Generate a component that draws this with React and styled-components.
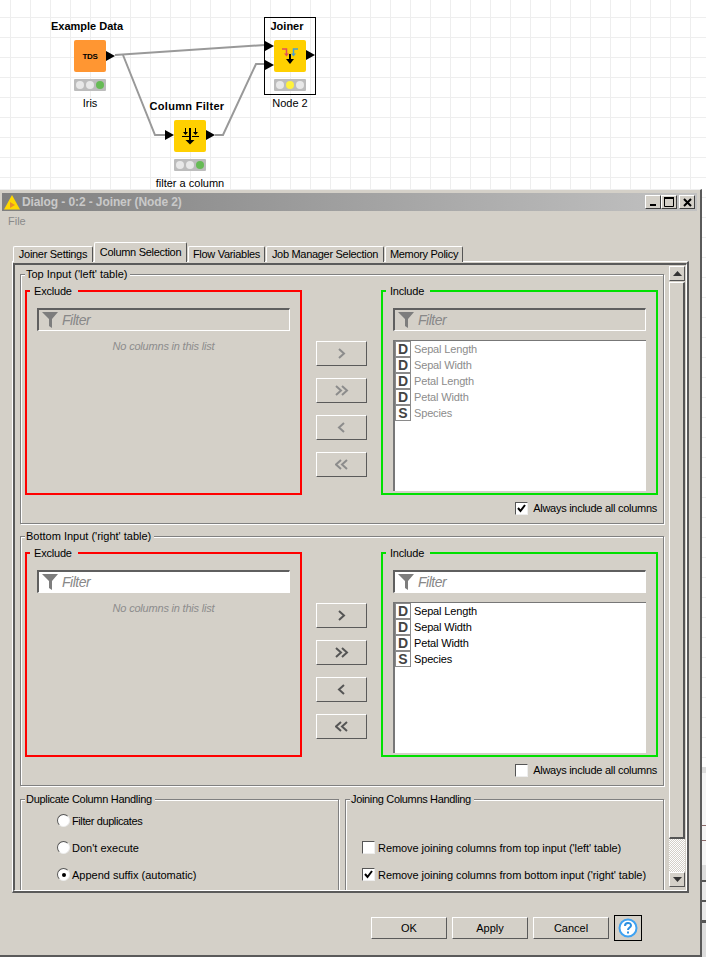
import React from 'react';
import styled, { createGlobalStyle } from 'styled-components';

const FACE = '#d4d0c8';

const GlobalStyle = createGlobalStyle`
  * {
    box-sizing: border-box;
  }

  body {
    margin: 0;
    background: #fff;
    font-family: "Liberation Sans", Arial, sans-serif;
    font-size: 11px;
    color: #000;
  }
`;

const Page = styled.div`
  position: relative;
  display: flex;
  flex-direction: column;
  width: 706px;
  height: 957px;
  overflow: hidden;
  background-color: #fff;
  background-image:
    linear-gradient(to right, #eeeeee 1px, transparent 1px),
    linear-gradient(to bottom, #eeeeee 1px, transparent 1px);
  background-size: 20px 20px;
  background-position: 10px 17px;
`;

const Canvas = styled.div`
  position: relative;
  flex: 0 0 189px;
`;

const Wires = styled.svg`
  position: absolute;
  inset: 0;
`;

const Node = styled.div`
  position: absolute;
  left: ${(p) => p.$x}px;
  top: ${(p) => p.$y}px;
  display: flex;
  flex-direction: column;
  align-items: center;
  width: 100px;
`;

const NodeTitle = styled.div`
  height: 14px;
  line-height: 14px;
  margin: 0 6px 7px 0;
  font-weight: bold;
  letter-spacing: ${(p) => p.$track || 0}px;
  white-space: nowrap;
`;

const NodeIcon = styled.div`
  position: relative;
  display: flex;
  align-items: center;
  justify-content: center;
  width: 32px;
  height: 32px;
  border-radius: 2px;
  background: ${(p) => p.$color};
  font-size: 8px;
  font-weight: bold;
  letter-spacing: -0.3px;
`;

const Port = styled.svg`
  position: absolute;
  top: ${(p) => p.$y}px;
  ${(p) => (p.$out ? 'left: 32px;' : 'left: -9px;')}
`;

const Lights = styled.div`
  display: flex;
  align-items: center;
  justify-content: center;
  gap: 2px;
  width: 32px;
  height: 12px;
  margin-top: 7px;
  background: #bcbcbc;
  border-radius: 1px;
`;

const Light = styled.span`
  width: 8px;
  height: 8px;
  border-radius: 50%;
  background: ${(p) => p.$color || '#e8e8e8'};
`;

const NodeLabel = styled.div`
  height: 14px;
  line-height: 14px;
  margin-top: 5px;
  white-space: nowrap;
`;

const Selection = styled.div`
  position: absolute;
  left: 24px;
  top: -2px;
  width: 52px;
  height: 78px;
  border: 1px solid #000;
  pointer-events: none;
`;

const Lower = styled.div`
  display: flex;
  flex: 1;
  min-height: 0;
`;

const Dialog = styled.div`
  display: flex;
  flex-direction: column;
  flex: 0 0 702px;
  padding: 3px 3px 0 2px;
  background: ${FACE};
  border-top: 1px solid #eeeeee;
  border-right: 2px solid #5a5a5a;
  border-bottom: 2px solid #5a5a5a;
`;

const TitleBar = styled.div`
  display: flex;
  align-items: center;
  height: 18px;
  padding: 0 2px;
  background: linear-gradient(to right, #7f7f7f, #c2c2c2);
  color: #c9c9c9;
  font-size: 12px;
  font-weight: bold;
  letter-spacing: -0.1px;
`;

const TitleText = styled.span`
  margin-left: 2px;
  flex: 1;
  white-space: nowrap;
`;

const WindowButton = styled.button`
  display: flex;
  align-items: center;
  justify-content: center;
  width: 16px;
  height: 14px;
  margin-left: ${(p) => p.$gap || 0}px;
  padding: 0;
  background: ${FACE};
  border: 1px solid;
  border-color: #fff #404040 #404040 #fff;
`;

const MenuBar = styled.div`
  height: 31px;
  padding: 3px 0 0 6px;
  color: #8a8a8a;
  font-size: 11px;
  line-height: 14px;
`;

const TabBar = styled.div`
  position: relative;
  z-index: 1;
  display: flex;
  align-items: flex-end;
  gap: 1px;
  height: 20px;
  margin-bottom: -1px;
  padding-left: 11px;
`;

const Tab = styled.div`
  display: flex;
  align-items: center;
  justify-content: center;
  width: ${(p) => p.$w}px;
  height: ${(p) => (p.$active ? 20 : 16)}px;
  padding-bottom: ${(p) => (p.$active ? 2 : 1)}px;
  background: ${FACE};
  border-top: 1px solid #fff;
  border-left: 1px solid #fff;
  border-right: 1px solid #555;
  border-radius: 2px 2px 0 0;
  letter-spacing: -0.3px;
  white-space: nowrap;
`;

const TabPanel = styled.div`
  width: 677px;
  height: 632px;
  margin-left: 10px;
  padding-top: 1px;
  border-top: 1px solid #fff;
  border-left: 1px solid #fff;
  border-right: 2px solid #5a5a5a;
  border-bottom: 2px solid #5a5a5a;
`;

const ScrollPane = styled.div`
  display: flex;
  height: 100%;
  border-top: 2px solid #5a5a5a;
  border-left: 2px solid #5a5a5a;
  border-right: 1px solid #fff;
  border-bottom: 1px solid #fff;
  overflow: hidden;
`;

const Content = styled.div`
  display: flex;
  flex-direction: column;
  gap: 5px;
  flex: 0 0 654px;
  padding: 2px 5px 0 5px;
`;

const Group = styled.fieldset`
  display: flex;
  flex-direction: column;
  flex-shrink: 0;
  min-width: 0;
  height: ${(p) => p.$h}px;
  margin: 0;
  padding: 0 5px 0 4px;
  border: 1px solid #808080;
  box-shadow: inset 1px 1px 0 #fff, 1px 1px 0 #fff;
`;

const GroupLegend = styled.legend`
  height: 14px;
  margin-left: 0;
  padding: 0 3px 0 1px;
  line-height: 14px;
  letter-spacing: ${(p) => p.$track || 0}px;
  background: ${FACE};
`;

const Columns = styled.div`
  display: grid;
  grid-template-columns: 277px 51px 277px;
  column-gap: 14px;
  padding-top: 3px;
`;

const ListBox = styled.fieldset`
  display: flex;
  flex-direction: column;
  min-width: 0;
  height: 211px;
  margin: 0;
  padding: 0 10px 2px;
  border: 2px solid ${(p) => p.$color};
`;

const BoxLegend = styled.legend`
  height: 14px;
  margin-left: -7px;
  padding: 0 6px 0 4px;
  line-height: 14px;
  letter-spacing: -0.2px;
`;

const FilterField = styled.div`
  display: flex;
  align-items: center;
  gap: 3px;
  flex: 0 0 23px;
  margin-top: 10px;
  padding-left: 3px;
  background: ${(p) => (p.$enabled ? '#fff' : 'transparent')};
  border-top: 2px solid #5f5f5f;
  border-left: 2px solid #5f5f5f;
  border-right: 1px solid #fff;
  border-bottom: 1px solid #fff;
  color: #888;
  font-size: 14px;
  font-style: italic;
  letter-spacing: -0.5px;
`;

const EmptyNote = styled.div`
  margin-top: 8px;
  color: #8c8c8c;
  font-style: italic;
  line-height: 14px;
  letter-spacing: -0.2px;
  text-align: center;
`;

const ColumnList = styled.div`
  display: flex;
  flex-direction: column;
  flex: 1;
  margin-top: 9px;
  background: #fff;
  border-top: 1px solid #777;
  border-left: 2px solid #777;
`;

const ColumnRow = styled.div`
  display: flex;
  align-items: center;
  gap: 3px;
  height: 16px;
  color: ${(p) => (p.$enabled ? '#000' : '#8c8c8c')};
  letter-spacing: -0.15px;
`;

const TypeBadge = styled.span`
  display: flex;
  align-items: center;
  justify-content: center;
  width: 16px;
  height: 16px;
  background: #fff;
  border: 1px solid #8a8a8a;
  color: #444;
  font-size: 14px;
  font-weight: bold;
  letter-spacing: 0;
`;

const MoveButtons = styled.div`
  display: flex;
  flex-direction: column;
  gap: 12px;
  padding-top: 57px;
`;

const RaisedButton = styled.button`
  display: flex;
  align-items: center;
  justify-content: center;
  width: ${(p) => p.$w}px;
  height: ${(p) => p.$h}px;
  padding: 0;
  background: ${FACE};
  border: 1px solid;
  border-color: #fff #5a5a5a #5a5a5a #fff;
  font-family: inherit;
  font-size: 11px;
  color: #000;
`;

const AlwaysRow = styled.div`
  display: flex;
  align-items: center;
  justify-content: flex-end;
  gap: 5px;
  height: 14px;
  margin-top: 6px;
  padding-right: 1px;
  letter-spacing: -0.27px;
`;

const Box = styled.span`
  display: flex;
  align-items: center;
  justify-content: center;
  flex: 0 0 13px;
  height: 13px;
  background: #fff;
  border: 1px solid;
  border-color: #555 #eee #eee #555;
`;

const Round = styled(Box)`
  border-radius: 50%;
`;

const Dot = styled.span`
  width: 4px;
  height: 4px;
  border-radius: 50%;
  background: #000;
`;

const BottomGroups = styled.div`
  display: grid;
  flex-shrink: 0;
  grid-template-columns: 319px 319px;
  column-gap: 6px;
  margin-top: 1px;
`;

const OptionList = styled.div`
  display: flex;
  flex-direction: column;
  padding: ${(p) => p.$top}px 0 0 ${(p) => p.$left}px;
`;

const Option = styled.div`
  display: flex;
  align-items: center;
  gap: ${(p) => p.$gap}px;
  height: 27px;
  letter-spacing: ${(p) => p.$track || 0}px;
  white-space: nowrap;
`;

const ScrollBar = styled.div`
  display: flex;
  flex-direction: column;
  flex: 0 0 16px;
  padding-top: 1px;
`;

const ScrollButton = styled.div`
  display: flex;
  align-items: center;
  justify-content: center;
  flex: 0 0 15px;
  background: ${FACE};
  border: 1px solid;
  border-color: #fff #555 #555 #fff;
`;

const ScrollThumb = styled.div`
  flex: 0 0 557px;
  margin-top: 1px;
  background: ${FACE};
  border-top: 1px solid #fff;
  border-left: 1px solid #fff;
  border-right: 2px solid #555;
  border-bottom: 2px solid #555;
`;

const ScrollTrack = styled.div`
  flex: 0 0 33px;
  background-color: #fff;
  background-image: conic-gradient(${FACE} 25%, transparent 0 50%, ${FACE} 0 75%, transparent 0);
  background-size: 2px 2px;
`;

const Footer = styled.div`
  display: flex;
  align-items: center;
  justify-content: flex-end;
  gap: 5px;
  height: 26px;
  margin-top: 22px;
  padding-right: 55px;
`;

const HelpFrame = styled.div`
  display: flex;
  align-items: center;
  justify-content: center;
  width: 28px;
  height: 26px;
  border: 1px solid #000;
`;

const SideStrip = styled.div`
  flex: 1;
  margin-top: 578px;
  background: linear-gradient(
    to bottom,
    #dcdcdc 0 6px,
    #f4f4f4 6px 58px,
    #8a6a6a 58px 59px,
    #f4f4f4 59px 73px,
    #8a6a6a 73px 74px,
    #f4f4f4 74px 98px,
    #dcdcdc 98px 113px,
    #555 113px 115px,
    #e8e8e8 115px 133px,
    #555 133px 135px,
    #e8e8e8 135px 153px,
    #555 153px 156px,
    #dcdcdc 156px
  );
`;

const Triangle = ({ down }) => (
  <svg width="9" height="5" viewBox="0 0 9 5">
    <path d={down ? 'M0 0h9L4.5 5z' : 'M0 5h9L4.5 0z'} fill="#333" />
  </svg>
);

const PortMark = ({ y, out }) => (
  <Port $y={y} $out={out} width="9" height="10" viewBox="0 0 9 10">
    <path d="M0 0L9 5L0 10z" fill="#000" />
  </Port>
);

const Funnel = () => (
  <svg width="17" height="18" viewBox="0 0 17 18">
    <path d="M0 1h16L10 8v9L7 15V8z" fill="#7d7d7d" />
  </svg>
);

const Chevrons = ({ double, left, color }) => {
  const shapes = double ? [1, 7] : [4];
  return (
    <svg width="14" height="11" viewBox="0 0 14 11" fill="none" stroke={color} strokeWidth="2">
      {shapes.map((x) => (
        <path key={x} d={left ? `M${x + 5} 1L${x} 5.5L${x + 5} 10` : `M${x} 1L${x + 5} 5.5L${x} 10`} />
      ))}
    </svg>
  );
};

const CheckMark = () => (
  <svg width="9" height="9" viewBox="0 0 9 9" fill="none" stroke="#000" strokeWidth="2">
    <path d="M1 4l2.5 3L8 1" />
  </svg>
);

const FilterIcon = () => (
  <svg width="32" height="32" viewBox="0 0 32 32" fill="none" stroke="#000">
    <path d="M11.500 8v4.500M21.500 8v4.500" />
    <path d="M9 12h5l-2.500 3zM19 12h5l-2.500 3z" fill="#000" stroke="none" />
    <path d="M8 16.500h7M18 16.500h7" />
    <path d="M16 8v13" strokeWidth="2" />
    <path d="M11.500 20h9L16 24.500z" fill="#000" stroke="none" />
  </svg>
);

const JoinerIcon = () => (
  <svg width="32" height="32" viewBox="0 0 32 32" fill="none">
    <path d="M8 9h4.500v5" stroke="#e0505a" strokeWidth="1.500" />
    <path d="M10 13.500h5L12.500 16.500z" fill="#e0505a" />
    <path d="M24 9h-4.500v5" stroke="#4a9fd0" strokeWidth="1.500" />
    <path d="M17 13.500h5L19.500 16.500z" fill="#4a9fd0" />
    <path d="M16 14v6" stroke="#000" strokeWidth="2" />
    <path d="M12 19h8L16 24z" fill="#000" />
  </svg>
);

const WarningIcon = () => (
  <svg width="16" height="15" viewBox="0 0 16 15">
    <path d="M8 0L16 14.500H0z" fill="#ffd800" />
    <path d="M6 7l5 3l-5 3z" fill="#e8902a" />
  </svg>
);

const HelpIcon = () => (
  <svg width="20" height="20" viewBox="0 0 20 20" fill="none">
    <circle cx="10" cy="10" r="8.500" fill="#fff" stroke="#3ea2f2" strokeWidth="2" />
    <path d="M7 8c0-4 6-4 6-.5c0 2-3 2-3 4.500" stroke="#2b8fe0" strokeWidth="2" />
    <rect x="9" y="13.500" width="2" height="2" fill="#2b8fe0" />
  </svg>
);

const Workflow = () => (
  <Canvas>
    <Wires width="706" height="189" fill="none" stroke="#999" strokeWidth="2">
      <path d="M115 55L265 45" />
      <path d="M123 55L155 135H165" />
      <path d="M215 135H223L256 64H265" />
    </Wires>
    <Node $x={40} $y={19}>
      <NodeTitle>Example Data</NodeTitle>
      <NodeIcon $color="#ff9632">
        TDS
        <PortMark y={11} out />
      </NodeIcon>
      <Lights>
        <Light />
        <Light />
        <Light $color="#66bb55" />
      </Lights>
      <NodeLabel>Iris</NodeLabel>
    </Node>
    <Node $x={140} $y={99}>
      <NodeTitle $track={0.3}>Column Filter</NodeTitle>
      <NodeIcon $color="#ffd000">
        <FilterIcon />
        <PortMark y={10} />
        <PortMark y={10} out />
      </NodeIcon>
      <Lights>
        <Light />
        <Light />
        <Light $color="#66bb55" />
      </Lights>
      <NodeLabel>filter a column</NodeLabel>
    </Node>
    <Node $x={240} $y={19}>
      <Selection />
      <NodeTitle>Joiner</NodeTitle>
      <NodeIcon $color="#ffd000">
        <JoinerIcon />
        <PortMark y={1} />
        <PortMark y={20} />
        <PortMark y={10} out />
      </NodeIcon>
      <Lights>
        <Light />
        <Light $color="#fff23c" />
        <Light />
      </Lights>
      <NodeLabel>Node 2</NodeLabel>
    </Node>
  </Canvas>
);

const ColumnPicker = ({ title, columns, enabled, always }) => {
  const tone = enabled ? '#555' : '#8c8c8c';
  return (
    <Group $h={257}>
      <GroupLegend>{title}</GroupLegend>
      <Columns>
        <ListBox $color="#ff0000">
          <BoxLegend>Exclude</BoxLegend>
          <FilterField $enabled={enabled}>
            <Funnel />
            Filter
          </FilterField>
          <EmptyNote>No columns in this list</EmptyNote>
        </ListBox>
        <MoveButtons>
          <RaisedButton $w={51} $h={25}><Chevrons color={tone} /></RaisedButton>
          <RaisedButton $w={51} $h={25}><Chevrons double color={tone} /></RaisedButton>
          <RaisedButton $w={51} $h={25}><Chevrons left color={tone} /></RaisedButton>
          <RaisedButton $w={51} $h={25}><Chevrons double left color={tone} /></RaisedButton>
        </MoveButtons>
        <ListBox $color="#00e000">
          <BoxLegend>Include</BoxLegend>
          <FilterField $enabled={enabled}>
            <Funnel />
            Filter
          </FilterField>
          <ColumnList>
            {columns.map(([type, name]) => (
              <ColumnRow key={name} $enabled={enabled}>
                <TypeBadge>{type}</TypeBadge>
                {name}
              </ColumnRow>
            ))}
          </ColumnList>
        </ListBox>
      </Columns>
      <AlwaysRow>
        <Box>{always && <CheckMark />}</Box>
        Always include all columns
      </AlwaysRow>
    </Group>
  );
};

const topColumns = [
  ['D', 'Sepal Length'],
  ['D', 'Sepal Width'],
  ['D', 'Petal Length'],
  ['D', 'Petal Width'],
  ['S', 'Species'],
];

const bottomColumns = [
  ['D', 'Sepal Length'],
  ['D', 'Sepal Width'],
  ['D', 'Petal Width'],
  ['S', 'Species'],
];

const tabs = [
  ['Joiner Settings', 80],
  ['Column Selection', 93],
  ['Flow Variables', 77],
  ['Job Manager Selection', 118],
  ['Memory Policy', 78],
];

const App = () => (
  <Page>
    <GlobalStyle />
    <Workflow />
    <Lower>
      <Dialog>
        <TitleBar>
          <WarningIcon />
          <TitleText>Dialog - 0:2 - Joiner (Node 2)</TitleText>
          <WindowButton>
            <svg width="8" height="8" viewBox="0 0 8 8"><rect x="1" y="6" width="6" height="2" /></svg>
          </WindowButton>
          <WindowButton>
            <svg width="10" height="10" viewBox="0 0 10 10" fill="none" stroke="#000">
              <path d="M0.500 1.500h9v8h-9z" />
              <path d="M0 1h10" strokeWidth="2" />
            </svg>
          </WindowButton>
          <WindowButton $gap={2}>
            <svg width="9" height="9" viewBox="0 0 9 9" stroke="#000" strokeWidth="2">
              <path d="M1 1l7 7M8 1l-7 7" />
            </svg>
          </WindowButton>
        </TitleBar>
        <MenuBar>File</MenuBar>
        <TabBar>
          {tabs.map(([label, w]) => (
            <Tab key={label} $w={w} $active={label === 'Column Selection'}>{label}</Tab>
          ))}
        </TabBar>
        <TabPanel>
          <ScrollPane>
            <Content>
              <ColumnPicker title="Top Input ('left' table)" columns={topColumns} always />
              <ColumnPicker title="Bottom Input ('right' table)" columns={bottomColumns} enabled />
              <BottomGroups>
                <Group $h={110}>
                  <GroupLegend $track={-0.3}>Duplicate Column Handling</GroupLegend>
                  <OptionList $top={1} $left={32}>
                    <Option $gap={2} $track={-0.4}><Round />Filter duplicates</Option>
                    <Option $gap={2}><Round />Don't execute</Option>
                    <Option $gap={2}><Round><Dot /></Round>Append suffix (automatic)</Option>
                  </OptionList>
                </Group>
                <Group $h={110}>
                  <GroupLegend $track={-0.33}>Joining Columns Handling</GroupLegend>
                  <OptionList $top={28} $left={12}>
                    <Option $gap={3} $track={-0.06}><Box />Remove joining columns from top input ('left' table)</Option>
                    <Option $gap={3} $track={-0.06}><Box><CheckMark /></Box>Remove joining columns from bottom input ('right' table)</Option>
                  </OptionList>
                </Group>
              </BottomGroups>
            </Content>
            <ScrollBar>
              <ScrollButton><Triangle /></ScrollButton>
              <ScrollThumb />
              <ScrollTrack />
              <ScrollButton><Triangle down /></ScrollButton>
            </ScrollBar>
          </ScrollPane>
        </TabPanel>
        <Footer>
          <RaisedButton $w={76} $h={22}>OK</RaisedButton>
          <RaisedButton $w={76} $h={22}>Apply</RaisedButton>
          <RaisedButton $w={76} $h={22}>Cancel</RaisedButton>
          <HelpFrame><HelpIcon /></HelpFrame>
        </Footer>
      </Dialog>
      <SideStrip />
    </Lower>
  </Page>
);

export default App;
